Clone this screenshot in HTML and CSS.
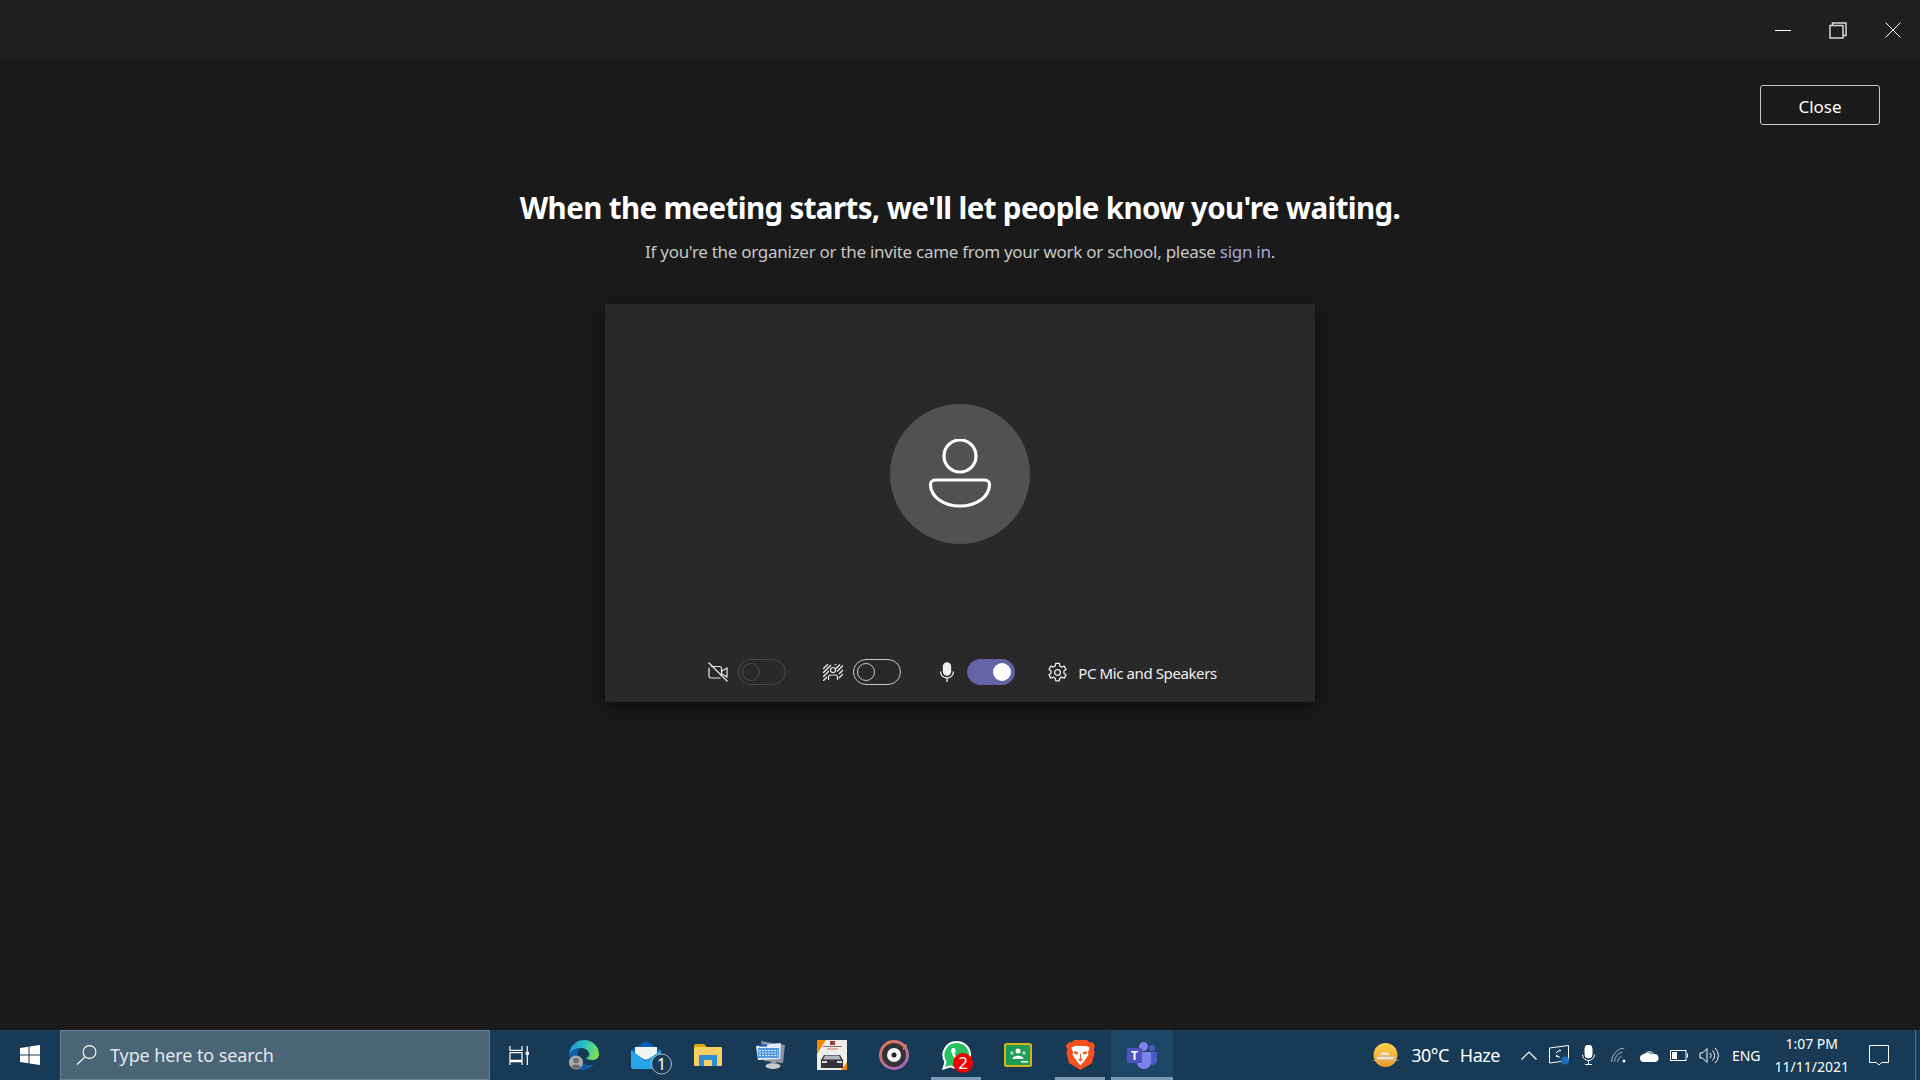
FILE: index.html
```html
<!DOCTYPE html>
<html lang="en">
<head>
    <meta charset="UTF-8">
    <title>Microsoft Teams</title>
    <link rel="stylesheet" href="styles.css">
</head>
<body>
    <div class="titlebar">
        <button class="win-btn"><svg width="16" height="16" viewBox="0 0 16 16"><path d="M0 8.500h16" stroke="#fff" fill="none"/></svg></button>
        <button class="win-btn"><svg width="18" height="17" viewBox="0 0 18 17" fill="none" stroke="#d8d8d8" stroke-width="1.500"><rect x="1" y="3.500" width="13" height="12.500"/><path d="M3.500 3.500V1H17v12.500h-3"/></svg></button>
        <button class="win-btn"><svg width="16" height="16" viewBox="0 0 16 16"><path d="M.5.500l15 15M15.500.500l-15 15" stroke="#fff" fill="none"/></svg></button>
    </div>

    <main class="content">
        <div class="close-row"><button class="close-btn">Close</button></div>
        <h1>When the meeting starts, we'll let people know you're waiting.</h1>
        <p class="sub">If you're the organizer or the invite came from your work or school, please <a href="#">sign in</a>.</p>

        <div class="panel">
            <div class="avatar">
                <svg width="64" height="70" viewBox="0 0 64 70" fill="none" stroke="#fff" stroke-width="3.200">
                    <circle cx="32" cy="17" r="16"/>
                    <path d="M7 41h50a4.500 4.500 0 0 1 4.500 4.500C61.500 58 48 67 32 67S2.500 58 2.500 45.500A4.500 4.500 0 0 1 7 41z"/>
                </svg>
            </div>
            <div class="controls">
                <svg class="ctl-icon" width="20" height="20" viewBox="0 0 20 20" fill="none" stroke="#e8e8e8" stroke-width="1.200"><path d="M3 4.500h8.500a2 2 0 0 1 2 2v7M12.500 16H3a2 2 0 0 1-2-2V5.500"/><path d="M14 9l5-3v9l-5-3"/><path d="M.5.500l19 19"/></svg>
                <span class="toggle disabled"><i></i></span>
                <svg class="ctl-icon blur-icon" width="20" height="17" viewBox="0 0 20 17" fill="none" stroke="#e8e8e8" stroke-width="1.200"><circle cx="10" cy="6" r="2.500"/><path d="M5.500 16v-3a2 2 0 0 1 2-2h5a2 2 0 0 1 2 2v3"/><path d="M0 5l5-5M0 9l8-8M0 13l6-6M0 17l4-4M12 1l1-1M12.500 5L17 .5M14 7.500L20 1.500M16 10l4-4M16 14l4-4" stroke-width="1.400"/></svg>
                <span class="toggle"><i></i></span>
                <svg class="ctl-icon mic-icon" width="16" height="21" viewBox="0 0 16 21" fill="none" stroke="#f0f0f0" stroke-width="1.300"><rect x="4.500" y="1" width="7" height="12" rx="3.500" fill="#f0f0f0"/><path d="M1.500 9.500a6.500 6.500 0 0 0 13 0M8 16v4"/></svg>
                <span class="toggle on"><i></i></span>
                <svg class="gear" width="21" height="21" viewBox="0 0 20 20" fill="none" stroke="#f0f0f0" stroke-width="1.200"><circle cx="10" cy="10" r="2.800"/><path d="M8.300 1.200h3.400l.5 2.600 1.700 1 2.500-.9 1.700 3-2 1.700v2l2 1.700-1.700 3-2.500-.9-1.700 1-.5 2.600H8.300l-.5-2.600-1.700-1-2.500.9-1.700-3 2-1.700v-2l-2-1.700 1.700-3 2.500.9 1.700-1z" stroke-linejoin="round"/></svg>
                <span class="device">PC Mic and Speakers</span>
            </div>
        </div>
    </main>

    <footer class="taskbar">
        <div class="start">
            <svg width="20" height="20" viewBox="0 0 20 20" fill="#fff"><path d="M0 3l8.500-1.200v7.700H0zM9.500 1.600L20 0v9.500H9.500zM0 10.500h8.500v7.700L0 17zM9.500 10.500H20V20L9.500 18.400z"/></svg>
        </div>
        <div class="search">
            <svg width="21" height="20" viewBox="0 0 21 20" fill="none" stroke="#fff" stroke-width="1.100"><circle cx="13.500" cy="7" r="6.400"/><path d="M9 12L1 19.500"/></svg>
            <span>Type here to search</span>
        </div>
        <div class="task-apps">
            <div class="task-view">
                <svg width="21" height="19" viewBox="0 0 21 19" fill="none" stroke="#fff" stroke-width="1.200"><path d="M1 0v4.300h12V0M1 6.700h12v7.600H1zM1 19v-3.300h12V19M18.300 0v5.700M18.300 9v10"/><path d="M16.700 5.700H20V9h-3.300z" fill="#fff" stroke="none"/></svg>
            </div>
            <div class="app">
                <svg width="30" height="30" viewBox="0 0 30 30">
                    <defs>
                        <linearGradient id="edgeTop" x1="0" y1="0.300" x2="1" y2="0.500"><stop offset="0" stop-color="#1c8fd8"/><stop offset="0.550" stop-color="#2fc8c0"/><stop offset="1" stop-color="#7ee04e"/></linearGradient>
                    </defs>
                    <path d="M0 14C1 6 7 0 15 0c9 0 15 7 15 14 0 4-3 6-7 6-3 0-5-1-6-2 3-1 4-3 3-5-1-3-4-5-8-5-5 0-9 2-12 6z" fill="url(#edgeTop)"/>
                    <path d="M0 14c3-4 7-6 12-6-3 2-4 6-3 10 2 5 6 7 11 7 2 0 3 0 5-1-3 4-7 6-11 6C6 30 0 23 0 14z" fill="#0f5ea8"/>
                    <circle cx="7" cy="22.500" r="7" fill="#a9a9a9"/>
                    <circle cx="7" cy="20.500" r="2.800" fill="#6b6b6b"/>
                    <path d="M2.500 27c1-3.500 8-3.500 9 0-2 2-7 2-9 0z" fill="#6b6b6b"/>
                </svg>
            </div>
            <div class="app">
                <svg class="spill" width="30" height="28" viewBox="0 0 30 28"><path d="M0 9L15 0l15 9v4H0z" fill="#0a5fb4"/><path d="M4 6h22v8l-11 5-11-5z" fill="#f4f4f4"/><path d="M0 9l15 11L30 9v17a2 2 0 0 1-2 2H2a2 2 0 0 1-2-2z" fill="#27a6ea"/><circle cx="30.500" cy="23" r="10" fill="#173a56" stroke="#a9bac7" stroke-width="1"/><text x="30.500" y="29" class="mail-count">1</text></svg>
            </div>
            <div class="app">
                <svg width="28" height="22" viewBox="0 0 28 22"><path d="M0 2a2 2 0 0 1 2-2h8l3 3H0z" fill="#dfa200"/><rect y="3" width="28" height="19" rx="1" fill="#f8d05f"/><path d="M5 11h18v11h-5v-6h-8v6H5z" fill="#2e8fd6"/></svg>
            </div>
            <div class="app">
                <svg width="29" height="28" viewBox="0 0 29 28"><path d="M5 0l24 4-2 18-19-2z" fill="#8794a6"/><path d="M0 5l25-3-1 16-22 1z" fill="#e6edf4"/><rect x="2" y="7" width="21" height="10" fill="#4f97de"/><path d="M3 9.500h19M3 12h19M3 14.500h19" stroke="#dceaf7" stroke-width="1" stroke-dasharray="2 1"/><rect x="3" y="3.500" width="8" height="2" fill="#1d4fa8"/><ellipse cx="17" cy="25" rx="7.500" ry="3" fill="#c9c9c9"/><rect x="15" y="19" width="5" height="4" fill="#9a9a9a"/></svg>
            </div>
            <div class="app">
                <svg width="30" height="30" viewBox="0 0 30 30"><rect width="30" height="30" fill="#f0eee8"/><path d="M0 0h9L0 14zM30 22v8h-6z" fill="#f18a00"/><rect x="13" y="1" width="5" height="4" fill="#a13a3a"/><rect x="6" y="6" width="19" height="1" fill="#8a6a6a"/><rect x="10" y="8.500" width="11" height="1" fill="#d86a6a"/><path d="M4 20l3-5h16l3 5v8H4z" fill="#33353a"/><path d="M8 15.500h14l2 4H6z" fill="#aeb6bf"/><rect x="5" y="21" width="5" height="2" fill="#ddd"/><rect x="20" y="21" width="5" height="2" fill="#ddd"/></svg>
            </div>
            <div class="app">
                <svg width="30" height="30" viewBox="0 0 30 30" fill="none">
                    <defs>
                        <linearGradient id="ring" x1="0" y1="0" x2="0.700" y2="1"><stop offset="0" stop-color="#e8764a"/><stop offset="1" stop-color="#a66ab8"/></linearGradient>
                    </defs>
                    <circle cx="15" cy="15" r="13.500" fill="#333" stroke="url(#ring)" stroke-width="3"/>
                    <circle cx="15" cy="15" r="7" fill="#f6f6f6"/>
                    <circle cx="15" cy="15" r="2.500" fill="#222"/>
                    <path d="M22 3.500l5 2-3 4" stroke="#e8764a" stroke-width="1.500"/>
                </svg>
            </div>
            <div class="app active">
                <svg class="spill" width="28" height="29" viewBox="0 0 28 29"><path d="M15 1a13 13 0 0 1 0 26c-2.500 0-4.500-.6-6.500-1.700L1.500 27.500l2-6.500A13 13 0 0 1 15 1z" fill="#27c25e" stroke="#fff" stroke-width="2"/><path d="M10.500 7c-2 1.500-1.500 5 1.500 9s6 5 8 4l.5-2-3-2.500-2 1c-1.500-1-2.500-2.500-3-4.500l1.500-1.500L12.500 7z" fill="#fff"/><circle cx="21" cy="22" r="10" fill="#f10000"/><text x="21" y="28" class="wa-count">2</text></svg>
            </div>
            <div class="app">
                <svg width="28" height="24" viewBox="0 0 28 24"><rect x="1" y="1" width="26" height="22" rx="1.500" fill="#1f9d57" stroke="#dcb21a" stroke-width="2"/><circle cx="14" cy="8" r="2.500" fill="#fff"/><circle cx="8" cy="10" r="1.800" fill="#a8dcc0"/><circle cx="20" cy="10" r="1.800" fill="#a8dcc0"/><path d="M8.500 16c0-4.500 11-4.500 11 0z" fill="#fff"/><rect x="17" y="18" width="7" height="1.500" fill="#fff"/></svg>
            </div>
            <div class="app active">
                <svg width="29" height="30" viewBox="0 0 29 30"><path d="M8 0h13l2.500 2.500L26 2l3 3.500-1.300 4.500 1 2.500L26 23l-11.500 7L3 23 .3 12.500l1-2.500L0 5.500 3 2l2.500.5z" fill="#f4511e"/><path d="M9 6h11l3.500 1.500-1.500 5 .5 2-2.500 4-3 4-2.500 3-2.500-3-3-4-2.500-4 .5-2L5.500 7.500z" fill="#fff"/><path d="M8.500 11l4 1.500-1 2-3.500-1zM20.500 11l-4 1.500 1 2 3.500-1zM12 19h5l-2.500 2.500zM14 14h1v5h-1z" fill="#f4511e"/></svg>
            </div>
            <div class="app current">
                <svg width="30" height="27" viewBox="0 0 30 27"><circle cx="16.500" cy="4.500" r="4.500" fill="#7b83eb"/><circle cx="25" cy="6" r="3" fill="#5059c9"/><path d="M20 10h9a1 1 0 0 1 1 1v7c0 3-2.500 5-5.500 5H20z" fill="#5059c9"/><path d="M10 10h13a1 1 0 0 1 1 1v9c0 4-3 7-7 7s-7-3-7-7z" fill="#7b83eb"/><rect x="0" y="6" width="15" height="15" rx="1.500" fill="#4b53bc"/><text x="7.500" y="17.500" class="teams-t">T</text></svg>
            </div>
        </div>

        <div class="tray">
            <div class="weather">
                <svg width="29" height="24" viewBox="0 0 29 24">
                    <defs>
                        <linearGradient id="sun" x1="0" y1="0" x2="0" y2="1"><stop offset="0" stop-color="#f8d24a"/><stop offset="1" stop-color="#f0992a"/></linearGradient>
                    </defs>
                    <circle cx="14.500" cy="12" r="12" fill="url(#sun)"/>
                    <path d="M9 12c1-4 8-4 10 0z" fill="#f5e6d3"/>
                    <path d="M0 17.500l6-1 1-4h16l2 4 4 1z" fill="#d9b98f"/>
                    <path d="M5 14h19l-3 2H7z" fill="#f5e6d3"/>
                </svg>
                <span class="temp">30°C</span><span class="haze">Haze</span>
            </div>
            <div class="tray-icons">
                <span><svg width="16" height="9" viewBox="0 0 16 9" fill="none" stroke="#fff" stroke-width="1.200"><path d="M.5 8.500l7.500-7.500 7.500 7.500"/></svg></span>
                <span><svg width="20" height="20" viewBox="0 0 20 20" fill="none" stroke="#fff" stroke-width="1"><path d="M.5 3L19.500.5v15L.5 18z"/><path d="M7 8l2-2h2.500M12 6l-1.500-1.500M11 12H9L7 10M7 12l1.500-1.500"/><circle cx="16" cy="15.500" r="4" fill="#1b6ec2" stroke="none"/></svg></span>
                <span><svg width="13" height="20" viewBox="0 0 13 20" fill="none" stroke="#fff" stroke-width="1"><rect x="3" y="0" width="7" height="13" rx="3.500" fill="#fff"/><path d="M.5 9.500a6 6 0 0 0 12 0M6.500 15.500V19M3 19.500h7"/></svg></span>
                <span><svg width="16" height="16" viewBox="0 0 16 16" fill="none" stroke="#a6b3bd" stroke-width="1"><path d="M.5 15a14 14 0 0 1 13-14M3.500 15a11 11 0 0 1 8-10M6.500 15a8 8 0 0 1 4-6"/><circle cx="13" cy="14" r="1.500" fill="#fff" stroke="none"/></svg></span>
                <span><svg width="20" height="13" viewBox="0 0 20 13"><path d="M6 4.500a5 5 0 0 1 9 0l-3 2.500-5-1.500z" fill="#8fa2b0"/><path d="M4.500 13a3.800 3.800 0 0 1-.5-7.500c2-2 6-2 8 0l3-.5a4 4 0 0 1 1 8z" fill="#fff"/></svg></span>
                <span><svg width="18" height="11" viewBox="0 0 18 11" fill="none" stroke="#fff" stroke-width="1"><rect x=".5" y=".5" width="15.500" height="10"/><rect x="2" y="2" width="5" height="7" fill="#fff" stroke="none"/><path d="M17.500 3.500v4"/></svg></span>
                <span><svg width="20" height="17" viewBox="0 0 20 17" fill="none" stroke="#fff" stroke-width="1"><path d="M1 6h2.500L8 1.500v14L3.500 11H1z"/><path d="M11 6a3.500 3.500 0 0 1 0 5M13.500 3.500a7 7 0 0 1 0 10M16 1a10 10 0 0 1 0 15"/></svg></span>
            </div>
            <span class="lang">ENG</span>
            <div class="clock"><span>1:07 PM</span><span>11/11/2021</span></div>
            <svg class="notify" width="20" height="21" viewBox="0 0 20 21" fill="none" stroke="#fff" stroke-width="1"><path d="M.5.500h19v17h-7L10 20l-2.500-2.500h-7z"/></svg>
            <div class="show-desktop"></div>
        </div>
    </footer>
</body>
</html>
```

FILE: styles.css
```css
html, body {
    margin: 0;
    height: 100%;
}
body {
    width: 1920px;
    height: 1080px;
    overflow: hidden;
    display: flex;
    flex-direction: column;
    background-color: #1a1a1a;
    color: #fff;
    font-family: "Noto Sans", "Open Sans", sans-serif;
}
.titlebar {
    height: 60px;
    flex: none;
    display: flex;
    justify-content: flex-end;
    align-items: center;
    background-color: #1f1f1f;
}
.win-btn {
    width: 55px;
    height: 60px;
    display: flex;
    justify-content: center;
    align-items: center;
    padding: 0;
    background: none;
    border: none;
}
.content {
    flex: 1;
    display: flex;
    flex-direction: column;
    align-items: center;
}
.close-row {
    width: 100%;
    box-sizing: border-box;
    display: flex;
    justify-content: flex-end;
    padding: 25px 40px 0 0;
}
.close-btn {
    width: 120px;
    height: 40px;
    padding-top: 4px;
    font-family: inherit;
    font-size: 17px;
    color: #fff;
    background: none;
    border: 1px solid #c8c8c8;
    border-radius: 3px;
}
h1 {
    margin: 63px 0 0;
    font-size: 29.500px;
    line-height: 40px;
    font-weight: 700;
    letter-spacing: -0.630px;
}
.sub {
    margin: 12px 0 0;
    font-size: 17px;
    line-height: 24px;
    letter-spacing: -0.280px;
    color: #c8c6c4;
}
.sub a {
    color: #a6a7dc;
    text-decoration: none;
}
.panel {
    width: 710px;
    height: 398px;
    margin-top: 40px;
    display: flex;
    flex-direction: column;
    align-items: center;
    background-color: #292929;
    box-shadow: 0 6px 16px rgba(0, 0, 0, 0.5);
}
.avatar {
    width: 140px;
    height: 140px;
    margin-top: 100px;
    border-radius: 50%;
    display: flex;
    justify-content: center;
    align-items: center;
    background-color: #515151;
}
.controls {
    margin: 115px 0 0 5px;
    height: 26px;
    display: flex;
    align-items: center;
}
.ctl-icon {
    margin-right: 10px;
}
.blur-icon {
    margin-left: 37px;
}
.mic-icon {
    margin-left: 38px;
    margin-right: 12px;
}
.toggle {
    width: 48px;
    height: 26px;
    box-sizing: border-box;
    display: flex;
    align-items: center;
    padding-left: 3px;
    border: 1px solid #c8c8c8;
    border-radius: 13px;
}
.toggle i {
    width: 16px;
    height: 16px;
    border: 1px solid #c8c8c8;
    border-radius: 50%;
}
.toggle.disabled, .toggle.disabled i {
    border-color: #4a4a4a;
}
.toggle.on {
    justify-content: flex-end;
    padding: 0 3px 0 0;
    background-color: #6264a7;
    border-color: #6264a7;
}
.toggle.on i {
    width: 18px;
    height: 18px;
    background-color: #fff;
    border: none;
}
.gear {
    margin-left: 32px;
    margin-right: 10px;
}
.device {
    padding-top: 2px;
    font-size: 15px;
    letter-spacing: -0.400px;
    color: #f0f0f0;
}
.taskbar {
    height: 50px;
    flex: none;
    display: flex;
    align-items: stretch;
    background-color: #173a56;
}
.start {
    width: 60px;
    display: flex;
    justify-content: center;
    align-items: center;
}
.search {
    width: 430px;
    box-sizing: border-box;
    display: flex;
    align-items: center;
    gap: 13px;
    padding-left: 15px;
    background-color: #4a6478;
    border: 1px solid #6a8194;
    font-size: 18px;
    letter-spacing: -0.100px;
    color: #e4e8ec;
}
.task-apps {
    display: flex;
}
.task-view {
    width: 63px;
    box-sizing: border-box;
    padding-right: 5px;
    display: flex;
    justify-content: center;
    align-items: center;
}
.app {
    position: relative;
    width: 62px;
    display: flex;
    justify-content: center;
    align-items: center;
}
.app.active::after, .app.current::after {
    content: "";
    position: absolute;
    left: 6px;
    right: 6px;
    bottom: 0;
    height: 3px;
    background-color: #7a9ab5;
}
.app.current {
    background-color: #1d4767;
}
.app.current::after {
    left: 0;
    right: 0;
}
.spill {
    overflow: visible;
}
.mail-count, .wa-count, .teams-t {
    font-family: "Noto Sans", sans-serif;
    text-anchor: middle;
}
.mail-count {
    font-size: 16px;
    fill: #fff;
}
.wa-count {
    font-size: 17px;
    fill: #fff;
}
.teams-t {
    font-size: 12px;
    font-weight: 700;
    fill: #fff;
}
.tray {
    margin-left: auto;
    display: flex;
    align-items: center;
}
.weather {
    display: flex;
    align-items: center;
    font-size: 18px;
    letter-spacing: -0.500px;
    margin-right: 14px;
}
.temp {
    margin-left: 11px;
    margin-right: 11px;
}
.tray-icons {
    display: flex;
}
.tray-icons span {
    width: 30px;
    display: flex;
    justify-content: center;
    align-items: center;
}
.lang {
    font-size: 14px;
    margin-left: 8px;
    margin-right: 14px;
}
.clock {
    display: flex;
    flex-direction: column;
    align-items: center;
    font-size: 14px;
    line-height: 23px;
}
.notify {
    margin-left: 20px;
    margin-right: 26px;
}
.show-desktop {
    width: 4px;
    align-self: stretch;
    border-left: 1px solid #5d7385;
}
```
